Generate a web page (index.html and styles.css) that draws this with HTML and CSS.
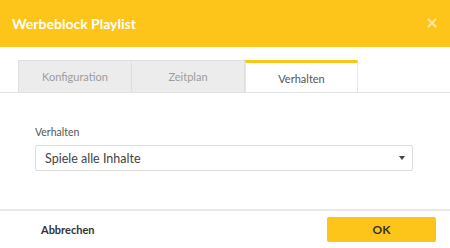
FILE: index.html
```html
<!DOCTYPE html>
<html lang="de">
<head>
<meta charset="utf-8">
<title>Werbeblock Playlist</title>
<link rel="stylesheet" href="styles.css">
</head>
<body>
<div class="dialog">
  <header class="dlg-header">
    <h1 class="dlg-title">Werbeblock Playlist</h1>
    <button class="dlg-close" aria-label="Schließen">×</button>
  </header>
  <nav class="tabs">
    <div class="tab">Konfiguration</div>
    <div class="tab">Zeitplan</div>
    <div class="tab active">Verhalten</div>
  </nav>
  <main class="dlg-body">
    <label class="field-label">Verhalten</label>
    <div class="select">
      <span class="select-value">Spiele alle Inhalte</span>
      <span class="caret"></span>
    </div>
  </main>
  <footer class="dlg-footer">
    <button class="btn-cancel">Abbrechen</button>
    <button class="btn-ok">OK</button>
  </footer>
</div>
</body>
</html>
```
FILE: styles.css
```css
* { box-sizing: border-box; }
html, body { margin: 0; padding: 0; background: #fff; }
body { font-family: Lato, "Open Sans", sans-serif; width: 450px; height: 248px; overflow: hidden; }
.dialog { display: flex; flex-direction: column; height: 248px; }
.dlg-header {
  height: 47px;
  background: #fdc51a;
  display: flex;
  align-items: center;
  justify-content: space-between;
  padding: 0 12px 0 12px;
}
.dlg-title { margin: 0; font-size: 14px; font-weight: 700; color: #fff; padding-bottom: 1px; }
.dlg-close {
  border: 0; background: none; padding: 0;
  color: rgba(255,255,255,0.6);
  font-family: "DejaVu Sans", sans-serif;
  font-size: 16px; font-weight: 700; line-height: 1;
  margin-right: -1px; margin-top: -2px;
}
.tabs {
  display: flex;
  padding: 13px 0 0 18px;
  border-bottom: 1px solid #e3e3e3;
}
.tab {
  width: 114px;
  height: 32px;
  display: flex;
  align-items: center;
  justify-content: center;
  font-size: 11px;
  color: #9c9c9c;
  background: #ececec;
  border: 1px solid #dedede;
  border-bottom: 0;
  margin-right: -1px;
}
.tab.active {
  width: 113px;
  background: #fff;
  color: #555;
  border-top: 3px solid #fdc51a;
  border-left: 1px solid #e6e6e6;
  border-right: 1px solid #e6e6e6;
  padding-top: 2px;
  margin-left: 1px;
}
.dlg-body { padding: 33px 37px 0 35px; flex: 1; }
.field-label { display: block; font-size: 10.5px; color: #555; margin-bottom: 7px; }
.select {
  height: 26px;
  border: 1px solid #dcdcdc;
  border-radius: 2px;
  display: flex;
  align-items: center;
  justify-content: space-between;
  padding: 0 7px 0 9px;
}
.select-value { font-size: 12.5px; color: #444; }
.caret {
  width: 0; height: 0;
  border-left: 3.5px solid transparent;
  border-right: 3.5px solid transparent;
  border-top: 4px solid #444;
}
.dlg-footer {
  height: 39px;
  border-top: 2px solid #e8e8e8;
  display: flex;
  align-items: center;
  justify-content: space-between;
  padding: 0 14px 0 41px;
}
.btn-cancel {
  border: 0; background: none; padding: 0;
  font-family: inherit; font-size: 11px; font-weight: 700; color: #333;
}
.btn-ok {
  width: 109px; height: 25px;
  border: 0; border-radius: 2px;
  background: #fdc51a;
  font-family: inherit; font-size: 12px; font-weight: 700; color: #333;
}
```
